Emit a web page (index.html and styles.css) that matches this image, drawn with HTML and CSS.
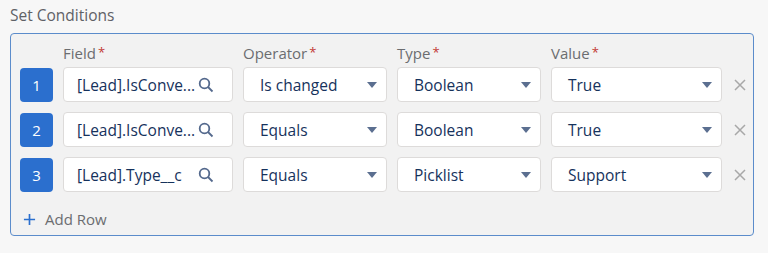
FILE: index.html
```html
<!DOCTYPE html>
<html lang="en">
<head>
  <meta charset="UTF-8">
  <title>Set Conditions</title>
  <link rel="stylesheet" href="styles.css">
</head>
<body>
  <div class="section-title">Set Conditions</div>

  <div class="conditions">
    <div class="grid head">
      <span></span>
      <label>Field<abbr>*</abbr></label>
      <label>Operator<abbr>*</abbr></label>
      <label>Type<abbr>*</abbr></label>
      <label>Value<abbr>*</abbr></label>
      <span></span>
    </div>

    <div class="grid row">
      <div class="badge">1</div>
      <div class="box lookup"><span class="txt">[Lead].IsConve...</span><svg class="search" viewBox="0 0 16 16"><circle cx="6.5" cy="6.5" r="4.8"/><path d="M10 10l4.5 4.5"/></svg></div>
      <div class="box select"><span class="txt">Is changed</span><i class="caret"></i></div>
      <div class="box select"><span class="txt">Boolean</span><i class="caret"></i></div>
      <div class="box select"><span class="txt">True</span><i class="caret"></i></div>
      <svg class="remove" viewBox="0 0 12 12"><path d="M1 1l10 10M11 1L1 11"/></svg>
    </div>

    <div class="grid row">
      <div class="badge">2</div>
      <div class="box lookup"><span class="txt">[Lead].IsConve...</span><svg class="search" viewBox="0 0 16 16"><circle cx="6.5" cy="6.5" r="4.8"/><path d="M10 10l4.5 4.5"/></svg></div>
      <div class="box select"><span class="txt">Equals</span><i class="caret"></i></div>
      <div class="box select"><span class="txt">Boolean</span><i class="caret"></i></div>
      <div class="box select"><span class="txt">True</span><i class="caret"></i></div>
      <svg class="remove" viewBox="0 0 12 12"><path d="M1 1l10 10M11 1L1 11"/></svg>
    </div>

    <div class="grid row">
      <div class="badge">3</div>
      <div class="box lookup"><span class="txt">[Lead].Type__c</span><svg class="search" viewBox="0 0 16 16"><circle cx="6.5" cy="6.5" r="4.8"/><path d="M10 10l4.5 4.5"/></svg></div>
      <div class="box select"><span class="txt">Equals</span><i class="caret"></i></div>
      <div class="box select"><span class="txt">Picklist</span><i class="caret"></i></div>
      <div class="box select"><span class="txt">Support</span><i class="caret"></i></div>
      <svg class="remove" viewBox="0 0 12 12"><path d="M1 1l10 10M11 1L1 11"/></svg>
    </div>

    <div class="add-row">
      <svg class="plus" viewBox="0 0 14 14"><path d="M7 1v12M1 7h12"/></svg>
      <span>Add Row</span>
    </div>
  </div>
</body>
</html>
```

FILE: styles.css
```css
* {
  box-sizing: border-box;
}

body {
  margin: 0;
  padding: 5px 10px;
  background: #f7f7f7;
  font-family: 'Open Sans', sans-serif;
  color: #16325c;
}

.section-title {
  font-size: 15.5px;
  line-height: 20px;
  color: #5f6166;
  margin-bottom: 8px;
}

.conditions {
  width: 744px;
  height: 203px;
  background: #f2f2f2;
  border: 1.5px solid #5b8ccb;
  border-radius: 4px;
  padding: 5px 9px 0 9px;
}

.grid {
  display: grid;
  grid-template-columns: 33px 170px 144px 144px 171px 24px;
  column-gap: 10px;
  align-items: center;
}

.head {
  height: 28px;
}

.head label {
  font-size: 15px;
  color: #6b6d70;
}

.head abbr {
  color: #c23934;
  font-size: 13px;
  margin-left: 2px;
  vertical-align: 2px;
}

.row {
  height: 35px;
  margin-bottom: 10px;
}

.badge {
  height: 34px;
  background: #2b6fce;
  border-radius: 4px;
  color: #fff;
  font-size: 15px;
  display: flex;
  align-items: center;
  justify-content: center;
}

.box {
  height: 35px;
  background: #fff;
  border: 1px solid #dddbda;
  border-radius: 4px;
  display: flex;
  align-items: center;
  padding: 0 12px 0 13px;
  font-size: 15.5px;
}

.select {
  padding: 0 9px 0 16px;
}

.txt {
  flex: 1;
  white-space: nowrap;
}

.search {
  width: 16px;
  height: 16px;
  fill: none;
  stroke: #54698d;
  stroke-width: 1.8;
  margin-right: 6px;
}

.caret {
  width: 0;
  height: 0;
  border-left: 5px solid transparent;
  border-right: 5px solid transparent;
  border-top: 6px solid #5b6f90;
}

.remove {
  width: 12px;
  height: 12px;
  fill: none;
  stroke: #a8a8a8;
  stroke-width: 1.5;
  margin-left: 2px;
}

.add-row {
  display: flex;
  align-items: center;
  gap: 9px;
  margin-top: 17px;
  padding-left: 3px;
  font-size: 15px;
  color: #6b6d70;
}

.plus {
  width: 13px;
  height: 13px;
  fill: none;
  stroke: #2b6fce;
  stroke-width: 1.8;
}
```
